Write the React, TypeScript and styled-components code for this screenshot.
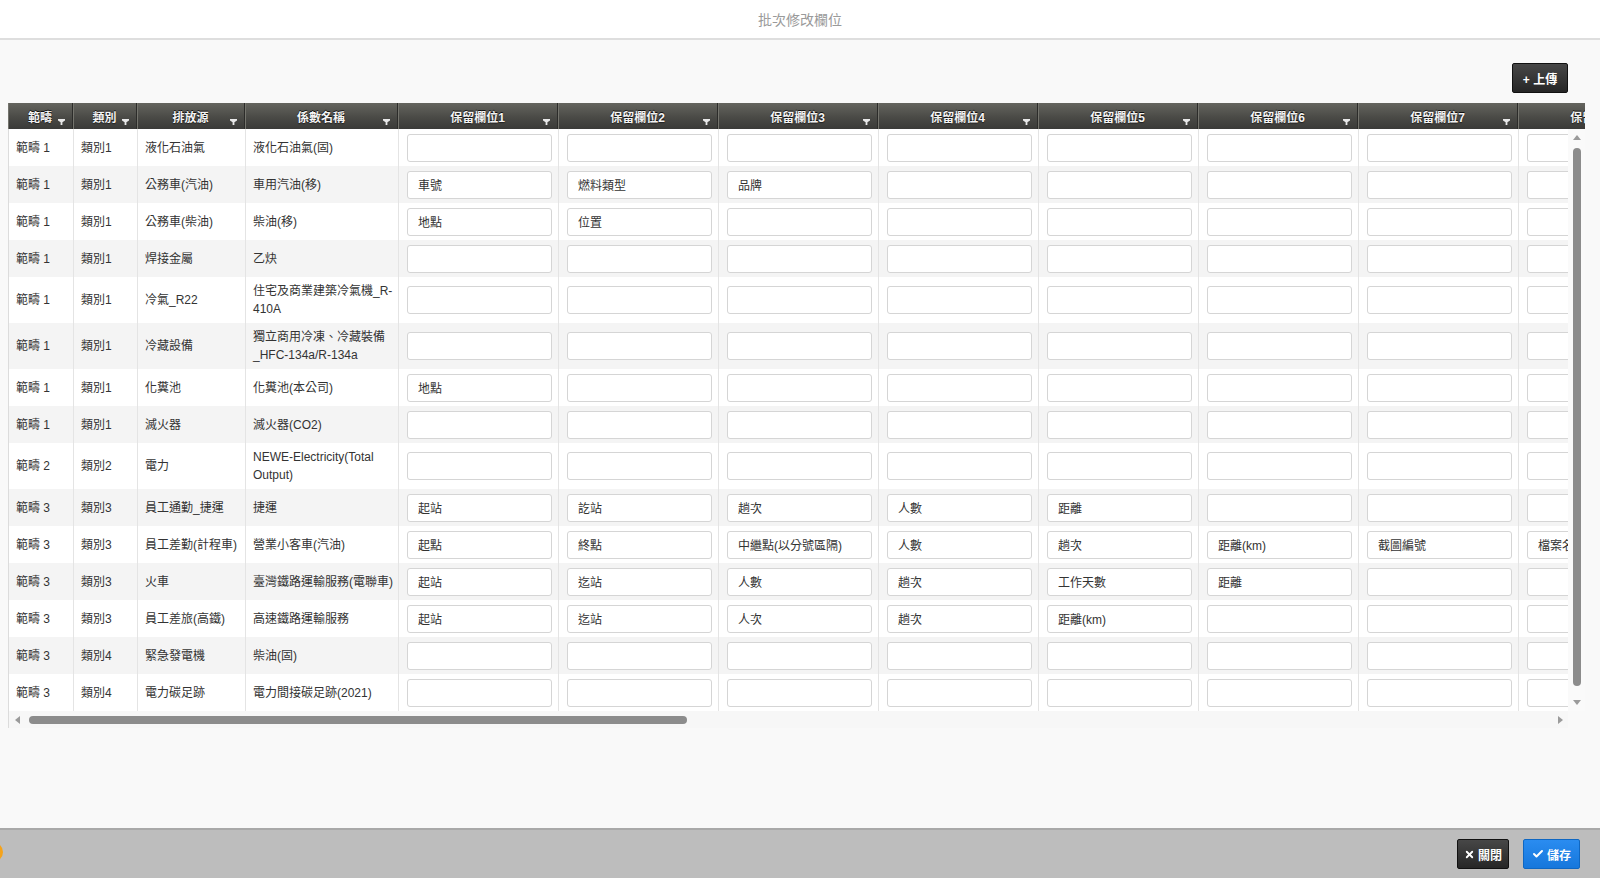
import React from "react";
import styled, { createGlobalStyle } from "styled-components";
import { X, Check } from "lucide-react";

const GlobalStyle = createGlobalStyle`
  html, body { margin: 0; padding: 0; height: 100%; }
  body {
    background: #f9f9f9;
    font-family: "Liberation Sans", "Noto Sans CJK TC", sans-serif;
    overflow: hidden;
  }
  #root { height: 100%; }
`;

const COLS = [65, 64, 108, 153, 160, 160, 160, 160, 160, 160, 160, 160];
const TEMPLATE = COLS.map((w) => `${w}px`).join(" ");
const HEADERS = [
  "範疇",
  "類別",
  "排放源",
  "係數名稱",
  ...Array.from({ length: 8 }, (_, i) => `保留欄位${i + 1}`),
];

type RowData = [string, string, string, string, string[]];

const ROWS: RowData[] = [
  ["範疇 1", "類別1", "液化石油氣", "液化石油氣(固)", []],
  ["範疇 1", "類別1", "公務車(汽油)", "車用汽油(移)", ["車號", "燃料類型", "品牌"]],
  ["範疇 1", "類別1", "公務車(柴油)", "柴油(移)", ["地點", "位置"]],
  ["範疇 1", "類別1", "焊接金屬", "乙炔", []],
  ["範疇 1", "類別1", "冷氣_R22", "住宅及商業建築冷氣機_R-\u200b410A", []],
  ["範疇 1", "類別1", "冷藏設備", "獨立商用冷凍、冷藏裝備_HFC-134a/R-134a", []],
  ["範疇 1", "類別1", "化糞池", "化糞池(本公司)", ["地點"]],
  ["範疇 1", "類別1", "滅火器", "滅火器(CO2)", []],
  ["範疇 2", "類別2", "電力", "NEWE-Electricity(Total Output)", []],
  ["範疇 3", "類別3", "員工通勤_捷運", "捷運", ["起站", "訖站", "趟次", "人數", "距離"]],
  [
    "範疇 3",
    "類別3",
    "員工差勤(計程車)",
    "營業小客車(汽油)",
    ["起點", "終點", "中繼點(以分號區隔)", "人數", "趟次", "距離(km)", "截圖編號", "檔案名稱"],
  ],
  ["範疇 3", "類別3", "火車", "臺灣鐵路運輸服務(電聯車)", ["起站", "迄站", "人數", "趟次", "工作天數", "距離"]],
  ["範疇 3", "類別3", "員工差旅(高鐵)", "高速鐵路運輸服務", ["起站", "迄站", "人次", "趟次", "距離(km)"]],
  ["範疇 3", "類別4", "緊急發電機", "柴油(固)", []],
  ["範疇 3", "類別4", "電力碳足跡", "電力間接碳足跡(2021)", []],
];

const Page = styled.div`
  display: flex;
  flex-direction: column;
  height: 100vh;
`;

const TitleBar = styled.div`
  height: 38px;
  flex-shrink: 0;
  background: #fff;
  border-bottom: 2px solid #dedede;
  display: flex;
  align-items: center;
  justify-content: center;
  color: #9a9a9a;
  font-size: 14px;
`;

const Content = styled.div`
  flex: 1;
  min-height: 0;
  background: #f9f9f9;
  padding: 23px 15px 0 8px;
  display: flex;
  flex-direction: column;
`;

const Toolbar = styled.div`
  display: flex;
  justify-content: flex-end;
  padding-right: 17px;
  margin-bottom: 10px;
`;

const DarkButton = styled.button`
  height: 30px;
  padding: 0 7px;
  display: inline-flex;
  align-items: center;
  gap: 4px;
  background: linear-gradient(#474747, #262626);
  border: 1px solid #111;
  border-radius: 2px;
  color: #fff;
  font-family: inherit;
  font-size: 12px;
  font-weight: bold;
  cursor: pointer;
`;

const UploadButton = styled(DarkButton)`
  width: 56px;
  justify-content: center;
`;

const TableFrame = styled.div`
  display: grid;
  grid-template-columns: 1fr 17px;
  grid-template-rows: 26px auto 17px;
`;

const HeaderViewport = styled.div`
  grid-column: 1 / 3;
  overflow: hidden;
`;

const HeaderRow = styled.div`
  display: grid;
  grid-template-columns: ${TEMPLATE};
  width: max-content;
  height: 26px;
`;

const HeaderCell = styled.div`
  display: grid;
  grid-template-columns: 14px 1fr 14px;
  align-items: center;
  background: linear-gradient(#65655f, #4a4a46 55%, #3a3a38);
  border-right: 1px solid #2c2c2a;
  box-shadow: inset 1px 0 0 #74746d;
  color: #f4f4f4;
  font-size: 12px;
  font-weight: bold;
  text-align: center;
  text-shadow: 0 -1px 0 #111, 0 1px 1px #222;
  white-space: nowrap;
`;

const FilterMark = styled.svg`
  align-self: end;
  margin-bottom: 4px;
`;

const BodyViewport = styled.div`
  overflow: hidden;
  background: #fff;
  border-left: 1px solid #dcdcdc;
`;

const Row = styled.div<{ $alt: boolean }>`
  display: grid;
  grid-template-columns: ${TEMPLATE};
  width: max-content;
  min-height: 37px;
  background: ${(p) => (p.$alt ? "#f4f4f4" : "#fff")};
`;

const TextCell = styled.div`
  display: flex;
  align-items: center;
  padding: 5px 2px 5px 7px;
  line-height: 18px;
  border-right: 1px solid #e4e4e4;
  color: #333;
  font-size: 12px;
`;

const InputCell = styled.div`
  display: flex;
  align-items: center;
  padding: 0 6px 0 8px;
  border-right: 1px solid #e4e4e4;
`;

const FieldInput = styled.input`
  width: 100%;
  height: 28px;
  box-sizing: border-box;
  border: 1px solid #d5d5d5;
  border-radius: 3px;
  background: #fff;
  padding: 0 10px;
  color: #333;
  font-family: inherit;
  font-size: 12px;
  outline: none;
`;

const VScroll = styled.div`
  display: flex;
  flex-direction: column;
  align-items: center;
  background: #fafafa;
`;

const ArrowBox = styled.div`
  width: 17px;
  height: 17px;
  flex-shrink: 0;
  display: flex;
  align-items: center;
  justify-content: center;
`;

const VThumb = styled.div`
  flex: 1;
  width: 8px;
  margin: 2px 0 8px;
  border-radius: 4px;
  background: #8c8c8c;
`;

const HScroll = styled.div`
  display: flex;
  align-items: center;
  background: #f7f7f7;
  border-left: 1px solid #dcdcdc;
`;

const HThumb = styled.div<{ $width: number }>`
  width: ${(p) => p.$width}px;
  height: 8px;
  margin-left: 3px;
  border-radius: 4px;
  background: #8c8c8c;
`;

const Spacer = styled.div`
  flex: 1;
`;

const Footer = styled.div`
  position: relative;
  height: 48px;
  flex-shrink: 0;
  background: #bdbdbd;
  border-top: 2px solid #a9a9a9;
  display: flex;
  align-items: center;
  justify-content: flex-end;
  gap: 14px;
  padding-right: 20px;
  overflow: hidden;
`;

const CloseButton = styled(DarkButton)`
  gap: 3px;
  padding: 0 6px;
`;

const SaveButton = styled(DarkButton)`
  gap: 3px;
  padding: 0 8px;
  background: linear-gradient(#2a8cf0, #1677dc);
  border-color: #0f67c2;
`;

const CornerDot = styled.span`
  position: absolute;
  left: -17px;
  top: 12px;
  width: 20px;
  height: 20px;
  border-radius: 50%;
  background: #f5a31a;
`;

const Funnel = () => (
  <FilterMark width="7" height="6" viewBox="0 0 7 6">
    <path d="M0 0h7v1.6L4.4 3.2V6H2.6V3.2L0 1.6z" fill="#e8e8e8" />
  </FilterMark>
);

const Tri = ({ dir }: { dir: "up" | "down" | "left" | "right" }) => {
  const d = {
    up: "M4 1L8 6H0z",
    down: "M0 1h8L4 6z",
    left: "M6 0v8L1 4z",
    right: "M2 0l5 4-5 4z",
  }[dir];
  return (
    <svg width="8" height="8" viewBox="0 0 8 8">
      <path d={d} fill="#9b9b9b" />
    </svg>
  );
};

export default function App() {
  return (
    <Page>
      <GlobalStyle />
      <TitleBar>批次修改欄位</TitleBar>
      <Content>
        <Toolbar>
          <UploadButton>+ 上傳</UploadButton>
        </Toolbar>
        <TableFrame>
          <HeaderViewport>
            <HeaderRow>
              {HEADERS.map((h) => (
                <HeaderCell key={h}>
                  <span />
                  <span>{h}</span>
                  <Funnel />
                </HeaderCell>
              ))}
            </HeaderRow>
          </HeaderViewport>
          <BodyViewport>
            {ROWS.map((r, i) => (
              <Row key={i} $alt={i % 2 === 1}>
                <TextCell>{r[0]}</TextCell>
                <TextCell>{r[1]}</TextCell>
                <TextCell>{r[2]}</TextCell>
                <TextCell>{r[3]}</TextCell>
                {Array.from({ length: 8 }, (_, k) => (
                  <InputCell key={k}>
                    <FieldInput defaultValue={r[4][k] ?? ""} />
                  </InputCell>
                ))}
              </Row>
            ))}
          </BodyViewport>
          <VScroll>
            <ArrowBox>
              <Tri dir="up" />
            </ArrowBox>
            <VThumb />
            <ArrowBox>
              <Tri dir="down" />
            </ArrowBox>
          </VScroll>
          <HScroll>
            <ArrowBox>
              <Tri dir="left" />
            </ArrowBox>
            <HThumb $width={658} />
            <Spacer />
            <ArrowBox>
              <Tri dir="right" />
            </ArrowBox>
          </HScroll>
        </TableFrame>
      </Content>
      <Footer>
        <CornerDot />
        <CloseButton>
          <X size={11} strokeWidth={4} />
          關閉
        </CloseButton>
        <SaveButton>
          <Check size={12} strokeWidth={4} />
          儲存
        </SaveButton>
      </Footer>
    </Page>
  );
}
